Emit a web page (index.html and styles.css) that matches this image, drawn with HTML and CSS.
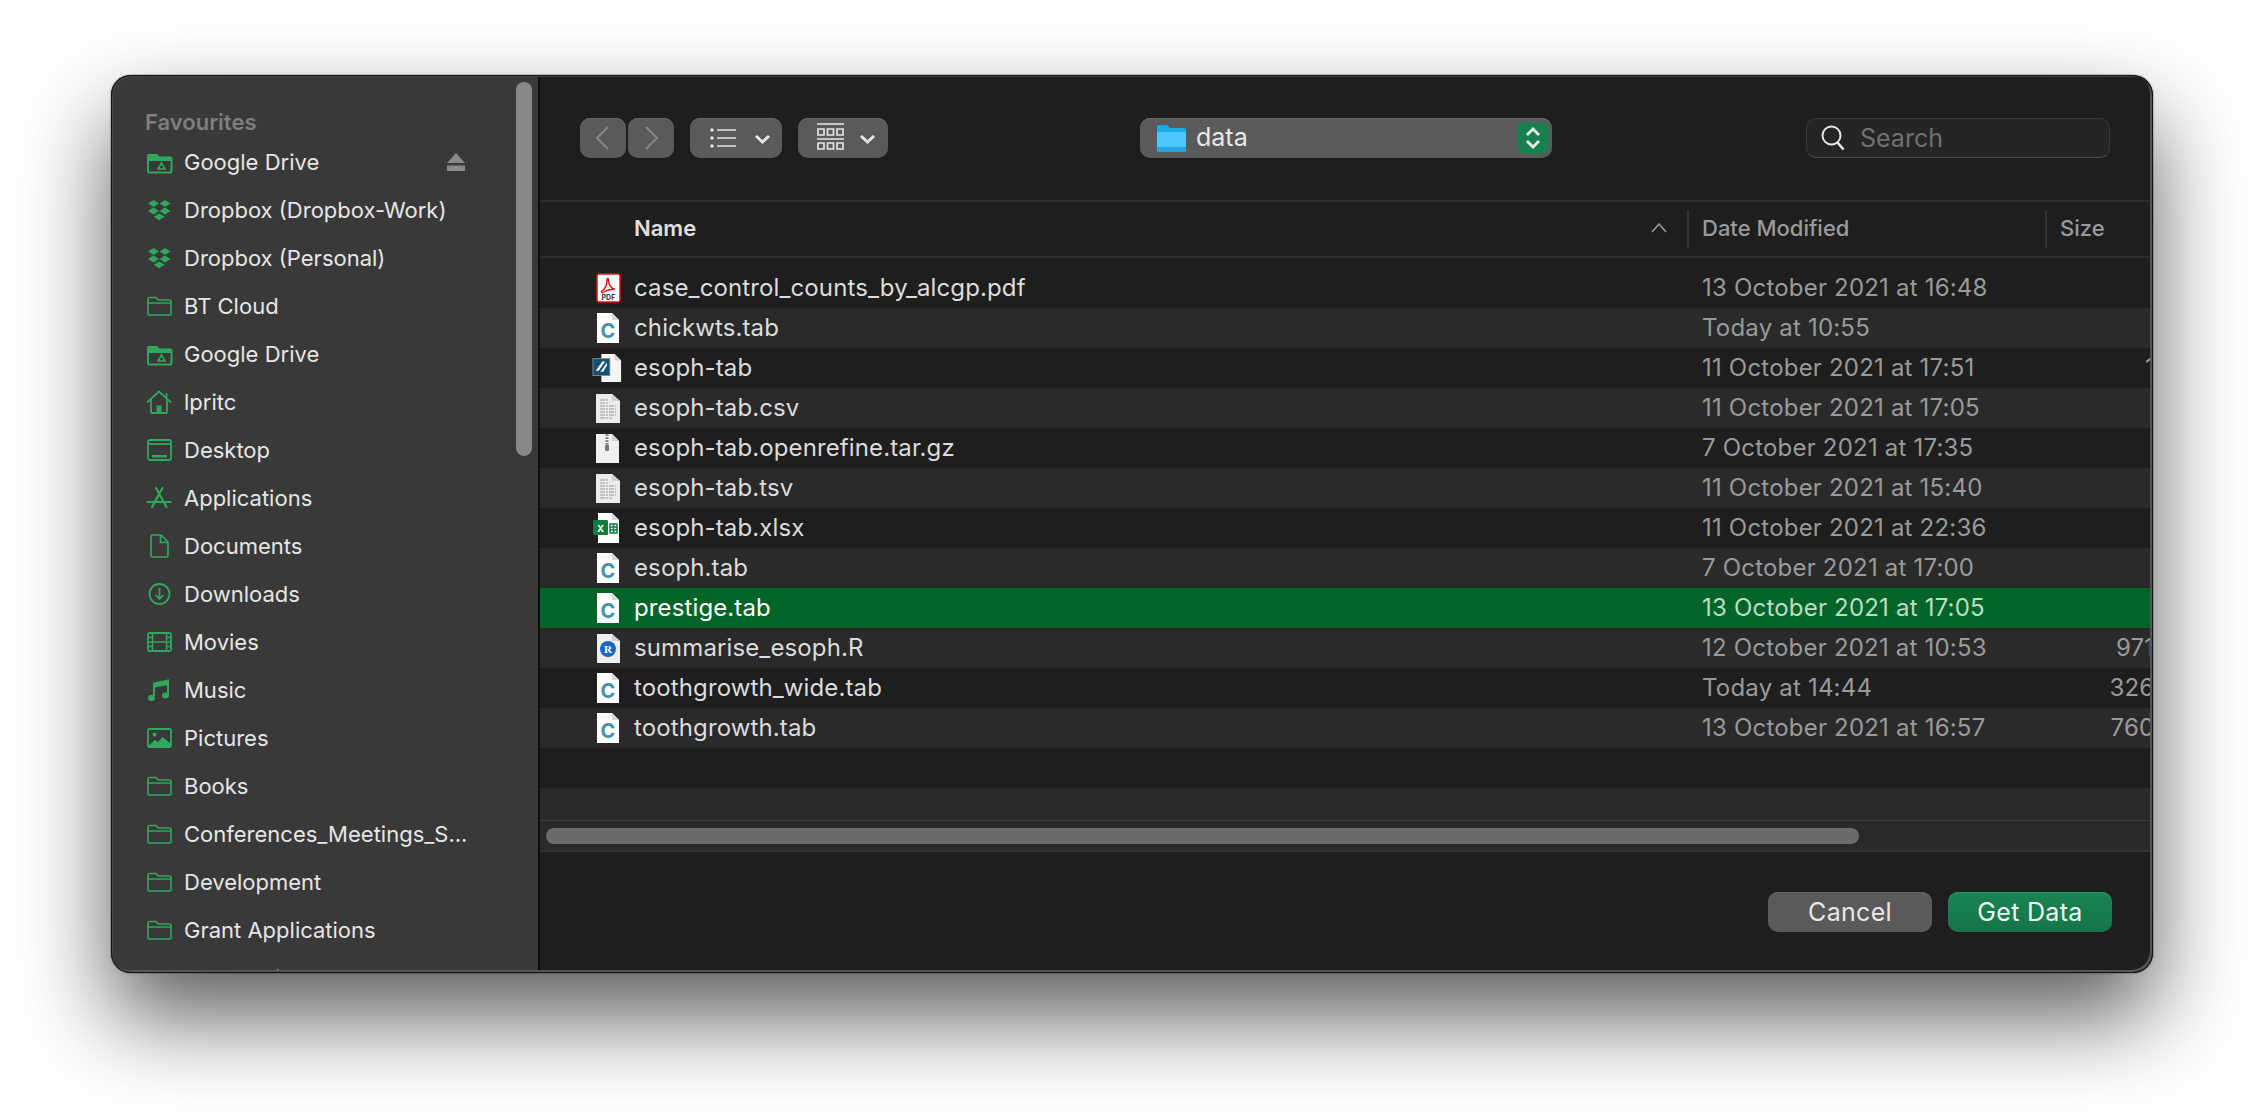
FILE: index.html
```html
<!DOCTYPE html>
<html lang="en">
<head>
<meta charset="utf-8">
<title>Open file</title>
<link rel="stylesheet" href="styles.css">
</head>
<body>
<svg class="defs" width="0" height="0" aria-hidden="true">
  <symbol id="i-folder" viewBox="0 0 28 24"><path d="M3 5a1.5 1.5 0 0 1 1.5-1.5h6.5l2.5 2.5h11a1.5 1.5 0 0 1 1.5 1.5v12a1.5 1.5 0 0 1-1.5 1.5h-20a1.5 1.5 0 0 1-1.5-1.5zM3 9h22.500" fill="none" stroke="currentColor" stroke-width="1.700"/></symbol>
  <symbol id="i-gdrive" viewBox="0 0 28 24"><path d="M3 9a1.500 1.500 0 0 1 1.500-1.500h20.500a1.500 1.500 0 0 1 1.500 1.500v12a1.500 1.500 0 0 1-1.500 1.500h-20.500a1.500 1.500 0 0 1-1.500-1.500z" fill="none" stroke="currentColor" stroke-width="2"/><path d="M2 9V5.500A1.500 1.500 0 0 1 3.500 4H12l3 3.500h10l1 3.500H2z" fill="currentColor"/><path d="M16.500 13l3.500 6h-7z" fill="none" stroke="currentColor" stroke-width="1.700"/></symbol>
  <symbol id="i-dropbox" viewBox="0 0 28 24"><path d="M8.500 2l5.500 3.500L8.500 9 3 5.500zM20 2l5.500 3.500L20 9l-5.500-3.500zM8.500 9.500l5.500 3.500-5.500 3.500L3 13zM20 9.500l5.500 3.500-5.500 3.500-5.500-3.500zM14.200 15.500l5.300 3.300-5.300 3.400-5.300-3.400z" fill="currentColor"/></symbol>
  <symbol id="i-home" viewBox="0 0 28 24"><path d="M2 12.500L14 1.500l12 11M6 9.500V22a1 1 0 0 0 1 1h14a1 1 0 0 0 1-1V9.500M21.500 3v5" fill="none" stroke="currentColor" stroke-width="1.800"/><path d="M11.500 15.500h5V23h-5z" fill="currentColor"/></symbol>
  <symbol id="i-desktop" viewBox="0 0 28 24"><rect x="3" y="2" width="23" height="20" rx="2" fill="none" stroke="currentColor" stroke-width="1.800"/><path d="M3 6h23" stroke="currentColor" stroke-width="1.800"/><path d="M7 17h15v2.500H7z" fill="currentColor"/></symbol>
  <symbol id="i-apps" viewBox="0 0 28 24"><path d="M11 2l10.500 19M17.500 2L7 21M2.500 16h23" fill="none" stroke="currentColor" stroke-width="2.200" stroke-linecap="round"/></symbol>
  <symbol id="i-doc" viewBox="0 0 28 24"><path d="M6 2.500A1.500 1.500 0 0 1 7.500 1H16l7 7v13.500a1.500 1.500 0 0 1-1.500 1.500h-14A1.500 1.500 0 0 1 6 21.500zM15.500 1.500V8.500H22.500" fill="none" stroke="currentColor" stroke-width="1.700"/></symbol>
  <symbol id="i-down" viewBox="0 0 28 24"><circle cx="14.500" cy="12" r="10" fill="none" stroke="currentColor" stroke-width="1.800"/><path d="M14.500 6v11M10.500 13l4 4 4-4" fill="none" stroke="currentColor" stroke-width="1.700"/></symbol>
  <symbol id="i-movie" viewBox="0 0 28 24"><rect x="3" y="3" width="23" height="18" rx="1.500" fill="none" stroke="currentColor" stroke-width="1.800"/><path d="M7.500 3v18M21.500 3v18M7.500 12h14M3 7.500h4.500M3 12h4.500M3 16.500h4.500M21.500 7.500H26M21.500 12H26M21.500 16.500H26" fill="none" stroke="currentColor" stroke-width="1.500"/></symbol>
  <symbol id="i-music" viewBox="0 0 28 24"><path d="M9 18V5.500L23 2.500v14" fill="none" stroke="currentColor" stroke-width="2"/><path d="M9.800 9.500V4.800L23.500 2v5z" fill="currentColor"/><ellipse cx="6.500" cy="20" rx="3.500" ry="3" fill="currentColor"/><ellipse cx="20.500" cy="17.500" rx="3.500" ry="3" fill="currentColor"/></symbol>
  <symbol id="i-pics" viewBox="0 0 28 24"><rect x="3" y="3" width="23" height="18" rx="1.500" fill="none" stroke="currentColor" stroke-width="1.800"/><circle cx="9.500" cy="8.500" r="2" fill="currentColor"/><path d="M3 20l7-6 3 2 4.500-5L26 18v3H3z" fill="currentColor"/></symbol>
  <symbol id="i-page" viewBox="0 0 30 32"><path d="M5 1h15l7 7v23H5z" fill="#fff"/><path d="M20 1v7h7z" fill="#d6d6d6"/></symbol>
  <symbol id="i-text" viewBox="0 0 30 32"><path d="M4 2h16l8 7v22H4z" fill="#ececec"/><path d="M20 2v7h8z" fill="#cfcfcf"/><path d="M8 8h9M8 11h9M8 14h16M8 17h16M8 20h16M8 23h16M8 26h12" stroke="#b4b4b4" stroke-width="1.300" stroke-dasharray="5 1 2 1"/></symbol>
  <symbol id="i-zip" viewBox="0 0 30 32"><path d="M4 2h16l7 7v22H4z" fill="#f0f0f0"/><path d="M20 2v7h7z" fill="#cfcfcf"/><path d="M15 2v13" stroke="#8c8c8c" stroke-width="3" stroke-dasharray="2 1"/><rect x="13" y="13" width="4" height="6" rx="1" fill="#777"/></symbol>
  <symbol id="i-pdf" viewBox="0 0 30 32"><rect x="5" y="2" width="23" height="28" rx="2" fill="#fff" stroke="#d8141c" stroke-width="1.500"/><path d="M10 19c3-2 5-6 5-11 0-2 1.500-2 1.500 0 0 4 2.500 8 6.500 9.500-4-.5-8 .5-11 2.500-2 1.500-3 0-2-1z" fill="none" stroke="#d8141c" stroke-width="1.500"/></symbol>
  <symbol id="i-stata" viewBox="0 0 32 32"><path d="M10 1h14l7 7v23H10z" fill="#f5f5f5"/><path d="M24 1v7h7z" fill="#d6d6d6"/><rect x="1" y="6" width="18" height="18" fill="#14506f" stroke="#7b8a94"/><path d="M4 19l7-10h3l-7 10zM9 20l7-10v3l-4 7z" fill="#fff"/></symbol>
  <symbol id="i-xls" viewBox="0 0 30 32"><path d="M6 1h14l7 7v23H6z" fill="#fff"/><path d="M20 1v7h7z" fill="#d6d6d6"/><rect x="1" y="8" width="15" height="15" rx="1" fill="#107c41"/><path d="M18 12h7v9h-7zM18 15h7M18 18h7M21.500 12v9" fill="none" stroke="#107c41" stroke-width="1.500"/></symbol>
  <symbol id="i-r" viewBox="0 0 30 32"><path d="M5 2h15l8 7v22H5z" fill="#efefef"/><path d="M20 2v7h8z" fill="#cfcfcf"/><circle cx="16" cy="17" r="8" fill="#1c66c4"/></symbol>
</svg>

<main class="window">
  <aside class="sidebar">
    <div class="side-title">Favourites</div>
    <div class="side-row"><svg class="side-ico"><use href="#i-gdrive"/></svg><span class="side-label">Google Drive</span>
      <svg class="eject" viewBox="0 0 18 18"><path d="M9 0l9 10H0zM0 12.500h18V18H0z"/></svg></div>
    <div class="side-row"><svg class="side-ico"><use href="#i-dropbox"/></svg><span class="side-label">Dropbox (Dropbox-Work)</span></div>
    <div class="side-row"><svg class="side-ico"><use href="#i-dropbox"/></svg><span class="side-label">Dropbox (Personal)</span></div>
    <div class="side-row"><svg class="side-ico"><use href="#i-folder"/></svg><span class="side-label">BT Cloud</span></div>
    <div class="side-row"><svg class="side-ico"><use href="#i-gdrive"/></svg><span class="side-label">Google Drive</span></div>
    <div class="side-row"><svg class="side-ico"><use href="#i-home"/></svg><span class="side-label">lpritc</span></div>
    <div class="side-row"><svg class="side-ico"><use href="#i-desktop"/></svg><span class="side-label">Desktop</span></div>
    <div class="side-row"><svg class="side-ico"><use href="#i-apps"/></svg><span class="side-label">Applications</span></div>
    <div class="side-row"><svg class="side-ico"><use href="#i-doc"/></svg><span class="side-label">Documents</span></div>
    <div class="side-row"><svg class="side-ico"><use href="#i-down"/></svg><span class="side-label">Downloads</span></div>
    <div class="side-row"><svg class="side-ico"><use href="#i-movie"/></svg><span class="side-label">Movies</span></div>
    <div class="side-row"><svg class="side-ico"><use href="#i-music"/></svg><span class="side-label">Music</span></div>
    <div class="side-row"><svg class="side-ico"><use href="#i-pics"/></svg><span class="side-label">Pictures</span></div>
    <div class="side-row"><svg class="side-ico"><use href="#i-folder"/></svg><span class="side-label">Books</span></div>
    <div class="side-row"><svg class="side-ico"><use href="#i-folder"/></svg><span class="side-label">Conferences_Meetings_S...</span></div>
    <div class="side-row"><svg class="side-ico"><use href="#i-folder"/></svg><span class="side-label">Development</span></div>
    <div class="side-row"><svg class="side-ico"><use href="#i-folder"/></svg><span class="side-label">Grant Applications</span></div>
    <div class="side-row"><svg class="side-ico"><use href="#i-gdrive"/></svg><span class="side-label">Manuscripts</span></div>
    <div class="side-thumb"></div>
  </aside>

  <section class="main">
    <header class="toolbar">
      <div class="nav">
        <button class="tool nav-btn"><svg viewBox="0 0 46 40"><path d="M28 9L17 20l11 11" class="nav-chev"/></svg></button>
        <button class="tool nav-btn"><svg viewBox="0 0 46 40"><path d="M18 9l11 11-11 11" class="nav-chev"/></svg></button>
      </div>
      <button class="tool view-btn list-btn">
        <svg viewBox="0 0 92 40"><path d="M27 12h19M27 20h19M27 28h19" class="tool-line"/><circle cx="22" cy="12" r="1.700" class="tool-dot"/><circle cx="22" cy="20" r="1.700" class="tool-dot"/><circle cx="22" cy="28" r="1.700" class="tool-dot"/><path d="M66 18l6.500 6 6.500-6" class="tool-chev"/></svg>
      </button>
      <button class="tool view-btn grid-btn">
        <svg viewBox="0 0 90 40"><path d="M19 6h27M19 21h27" class="tool-line"/><path d="M20 11h6v6h-6zM29.500 11h6v6h-6zM39 11h6v6h-6zM20 25h6v6h-6zM29.500 25h6v6h-6zM39 25h6v6h-6z" class="tool-box"/><path d="M63 18l6.500 6 6.500-6" class="tool-chev"/></svg>
      </button>
      <div class="path-popup">
        <svg class="path-folder" viewBox="0 0 30 30"><path d="M1 4a2 2 0 0 1 2-2h8l3 3h14a2 2 0 0 1 2 2v20a2 2 0 0 1-2 2H3a2 2 0 0 1-2-2z" fill="#1fa8e6"/><path d="M1 9h29v18a2 2 0 0 1-2 2H3a2 2 0 0 1-2-2z" fill="#4cc6fb"/><path d="M1 24h29v3a2 2 0 0 1-2 2H3a2 2 0 0 1-2-2z" fill="#22a6e2"/></svg>
        <span class="path-name">data</span>
        <span class="stepper"><svg viewBox="0 0 32 32"><path d="M10 13l6-6 6 6M10 19l6 6 6-6" class="step-chev"/></svg></span>
      </div>
      <label class="search">
        <svg class="search-ico" viewBox="0 0 26 28"><circle cx="11.500" cy="11.500" r="9" fill="none" stroke="#e8e8e8" stroke-width="2"/><path d="M17.500 18.500l6 7" stroke="#e8e8e8" stroke-width="2.500"/></svg>
        <span class="search-text">Search</span>
      </label>
    </header>

    <div class="thead">
      <div class="th th-name"><span>Name</span><svg class="sort" viewBox="0 0 16 10"><path d="M1 9l7-8 7 8" fill="none" stroke="#9a9a9a" stroke-width="1.500"/></svg></div>
      <div class="th th-date">Date Modified</div>
      <div class="th th-size">Size</div>
    </div>

    <div class="list">
      <div class="row"><div class="cell-name"><svg class="file-ico" viewBox="0 0 30 32"><use href="#i-pdf"/><text x="16.500" y="28" text-anchor="middle" class="pdf-letter">PDF</text></svg>case_control_counts_by_alcgp.pdf</div><div class="cell-date">13 October 2021 at 16:48</div><div class="cell-size"></div></div>
      <div class="row"><div class="cell-name"><svg class="file-ico" viewBox="0 0 30 32"><use href="#i-page"/><text x="16" y="26" text-anchor="middle" class="c-letter">C</text></svg>chickwts.tab</div><div class="cell-date">Today at 10:55</div><div class="cell-size"></div></div>
      <div class="row"><div class="cell-name"><svg class="file-ico" viewBox="0 0 30 32"><use href="#i-stata"/></svg>esoph-tab</div><div class="cell-date">11 October 2021 at 17:51</div><div class="cell-size">108 KB</div></div>
      <div class="row"><div class="cell-name"><svg class="file-ico" viewBox="0 0 30 32"><use href="#i-text"/></svg>esoph-tab.csv</div><div class="cell-date">11 October 2021 at 17:05</div><div class="cell-size"></div></div>
      <div class="row"><div class="cell-name"><svg class="file-ico" viewBox="0 0 30 32"><use href="#i-zip"/></svg>esoph-tab.openrefine.tar.gz</div><div class="cell-date">7 October 2021 at 17:35</div><div class="cell-size"></div></div>
      <div class="row"><div class="cell-name"><svg class="file-ico" viewBox="0 0 30 32"><use href="#i-text"/></svg>esoph-tab.tsv</div><div class="cell-date">11 October 2021 at 15:40</div><div class="cell-size"></div></div>
      <div class="row"><div class="cell-name"><svg class="file-ico" viewBox="0 0 30 32"><use href="#i-xls"/><text x="8.500" y="20" text-anchor="middle" class="x-letter">X</text></svg>esoph-tab.xlsx</div><div class="cell-date">11 October 2021 at 22:36</div><div class="cell-size"></div></div>
      <div class="row"><div class="cell-name"><svg class="file-ico" viewBox="0 0 30 32"><use href="#i-page"/><text x="16" y="26" text-anchor="middle" class="c-letter">C</text></svg>esoph.tab</div><div class="cell-date">7 October 2021 at 17:00</div><div class="cell-size"></div></div>
      <div class="row selected"><div class="cell-name"><svg class="file-ico" viewBox="0 0 30 32"><use href="#i-page"/><text x="16" y="26" text-anchor="middle" class="c-letter">C</text></svg>prestige.tab</div><div class="cell-date">13 October 2021 at 17:05</div><div class="cell-size"></div></div>
      <div class="row"><div class="cell-name"><svg class="file-ico" viewBox="0 0 30 32"><use href="#i-r"/><text x="16" y="21" text-anchor="middle" class="r-letter">R</text></svg>summarise_esoph.R</div><div class="cell-date">12 October 2021 at 10:53</div><div class="cell-size">971 bytes</div></div>
      <div class="row"><div class="cell-name"><svg class="file-ico" viewBox="0 0 30 32"><use href="#i-page"/><text x="16" y="26" text-anchor="middle" class="c-letter">C</text></svg>toothgrowth_wide.tab</div><div class="cell-date">Today at 14:44</div><div class="cell-size">326 bytes</div></div>
      <div class="row"><div class="cell-name"><svg class="file-ico" viewBox="0 0 30 32"><use href="#i-page"/><text x="16" y="26" text-anchor="middle" class="c-letter">C</text></svg>toothgrowth.tab</div><div class="cell-date">13 October 2021 at 16:57</div><div class="cell-size">760 bytes</div></div>
      <div class="row"></div>
      <div class="row"></div>
    </div>

    <div class="hscroll"><div class="hthumb"></div></div>

    <footer class="footer">
      <button class="btn btn-cancel">Cancel</button>
      <button class="btn btn-primary">Get Data</button>
    </footer>
  </section>
</main>
</body>
</html>
```

FILE: styles.css
```css
* { box-sizing: border-box; }
html, body { margin: 0; height: 100%; }
body {
  background: #fff;
  font-family: Inter, "Noto Sans", sans-serif;
  font-size: 22px;
  overflow: hidden;
}
button { font: inherit; border: 0; padding: 0; margin: 0; }
.defs { display: block; height: 0; }

.window {
  position: relative;
  display: flex;
  width: 2042px;
  height: 898px;
  margin: 75px 0 0 111px;
  border-radius: 20px;
  overflow: hidden;
  background: #1e1e1e;
  box-shadow: 0 44px 90px rgba(0, 0, 0, .64), 0 0 2px rgba(0, 0, 0, .6);
}
.window::after {
  content: "";
  position: absolute;
  inset: 0;
  border-radius: 20px;
  border: 1px solid #111;
  box-shadow: inset -2px -2px 0 0 #555, inset 1px 1px 0 0 #454545;
  pointer-events: none;
}

/* Sidebar */
.sidebar {
  position: relative;
  flex: none;
  width: 429px;
  padding: 32px 0 0 34px;
  background: #393939;
  border-right: 2px solid #0c0c0c;
  overflow: hidden;
}
.side-title {
  height: 31px;
  line-height: 30px;
  font-size: 22px;
  font-weight: 600;
  color: #7e7e7e;
}
.side-row {
  display: flex;
  align-items: center;
  gap: 11px;
  height: 48px;
  color: #e6e6e6;
}
.side-ico {
  flex: none;
  width: 28px;
  height: 24px;
  color: #2fa75c;
}
.side-label { white-space: nowrap; }
.eject {
  width: 18px;
  height: 18px;
  margin-left: auto;
  margin-right: 73px;
  fill: #8a8a8a;
}
.side-thumb {
  position: absolute;
  top: 7px;
  left: 405px;
  width: 16px;
  height: 374px;
  border-radius: 8px;
  background: #888;
}

/* Main column */
.main {
  flex: 1;
  min-width: 0;
  display: flex;
  flex-direction: column;
  overflow: hidden;
}

/* Toolbar */
.toolbar {
  flex: none;
  display: flex;
  align-items: flex-start;
  height: 127px;
  padding: 43px 0 0 40px;
  border-bottom: 2px solid #2d2d2d;
}
.tool {
  display: block;
  height: 40px;
  border-radius: 10px;
  background: #5a5a5a;
  box-shadow: inset 0 1px 0 #666;
}
.tool svg { display: block; width: 100%; height: 100%; }
.nav { display: flex; gap: 2px; }
.nav-btn { width: 46px; }
.nav-chev { fill: none; stroke: #868686; stroke-width: 2; }
.view-btn { margin-left: 16px; }
.list-btn { width: 92px; }
.grid-btn { width: 90px; }
.tool-line { fill: none; stroke: #e6e6e6; stroke-width: 1.700; }
.tool-dot { fill: #e6e6e6; }
.tool-box { fill: none; stroke: #e6e6e6; stroke-width: 1.700; }
.tool-chev { fill: none; stroke: #e6e6e6; stroke-width: 3; }

.path-popup {
  display: flex;
  align-items: center;
  width: 412px;
  height: 40px;
  margin-left: 252px;
  padding: 0 3px 0 16px;
  border-radius: 10px;
  background: #5a5a5a;
  box-shadow: inset 0 1px 0 #6a6a6a;
  color: #e8e8e8;
  font-size: 25px;
  line-height: 36px;
}
.path-folder { flex: none; width: 30px; height: 30px; }
.path-name { margin-left: 10px; flex: 1; padding-bottom: 3px; }
.stepper {
  flex: none;
  width: 32px;
  height: 32px;
  border-radius: 8px;
  background: #1a7f4e;
}
.stepper svg { display: block; width: 100%; height: 100%; }
.step-chev { fill: none; stroke: #e8f2ec; stroke-width: 2.800; }

.search {
  display: flex;
  align-items: center;
  width: 304px;
  height: 40px;
  margin-left: 254px;
  padding-left: 13px;
  border-radius: 10px;
  border: 1px solid #383838;
  border-bottom-color: #4c4c4c;
  background: #252525;
}
.search-ico { flex: none; width: 26px; height: 28px; }
.search-text { margin-left: 14px; color: #707070; font-size: 25px; }

/* Table head */
.thead {
  flex: none;
  display: flex;
  align-items: center;
  width: 1690px;
  height: 56px;
  border-bottom: 2px solid #2d2d2d;
  font-size: 22px;
}
.th { height: 38px; display: flex; align-items: center; padding-bottom: 2px; }
.th-name {
  width: 1147px;
  padding-left: 94px;
  padding-right: 20px;
  justify-content: space-between;
  font-weight: 600;
  color: #e0e0e0;
}
.sort { width: 16px; height: 10px; }
.th-date, .th-size {
  border-left: 2px solid #333;
  padding-left: 13px;
  color: #9a9a9a;
  font-weight: 500;
}
.th-date { width: 358px; }

/* List */
.list {
  flex: 1;
  min-height: 0;
  padding-top: 10px;
  overflow: hidden;
}
.row {
  display: flex;
  align-items: center;
  width: 1690px;
  height: 40px;
  padding-bottom: 2px;
  background: #1e1e1e;
  color: #dcdcdc;
  font-size: 24px;
  letter-spacing: .12px;
  white-space: nowrap;
}
.row:nth-child(even) { background: #2a2a2a; }
.row.selected { background: #016428; color: #fff; }
.cell-name {
  display: flex;
  align-items: center;
  gap: 12px;
  width: 1147px;
  padding-left: 52px;
}
.file-ico { flex: none; width: 30px; height: 32px; margin-top: 2px; }
.cell-date { width: 358px; padding-left: 15px; color: #9a9a9a; letter-spacing: .2px; }
.selected .cell-date { color: #bcdcc6; }
.cell-size { width: 179px; text-align: right; color: #9a9a9a; }
.c-letter { font: 700 20px Inter, sans-serif; fill: #4391ab; }
.pdf-letter { font: 700 7px Inter, sans-serif; fill: #333; }
.x-letter { font: 700 11px "Liberation Mono", monospace; fill: #fff; }
.r-letter { font: 700 11px "Liberation Serif", serif; fill: #fff; }

/* Horizontal scroller */
.hscroll {
  flex: none;
  height: 32px;
  padding: 7px 0 0 6px;
  background: #2a2a2a;
  border-top: 1px solid #3c3c3c;
  border-bottom: 2px solid #333;
}
.hthumb {
  width: 1313px;
  height: 16px;
  border-radius: 8px;
  background: #6b6b6b;
}

/* Footer */
.footer {
  flex: none;
  display: flex;
  justify-content: flex-end;
  gap: 16px;
  height: 121px;
  padding: 40px 41px 0 0;
}
.btn {
  width: 164px;
  height: 40px;
  border-radius: 10px;
  font-size: 25px;
  letter-spacing: .3px;
  color: #e8e8e8;
}
.btn-cancel { background: #5a5a5a; box-shadow: inset 0 1px 0 #666; }
.btn-primary {
  background: linear-gradient(#1a8452, #16744a);
  box-shadow: inset 0 1px 0 #2a9562;
  color: #f0f5f2;
}
```
